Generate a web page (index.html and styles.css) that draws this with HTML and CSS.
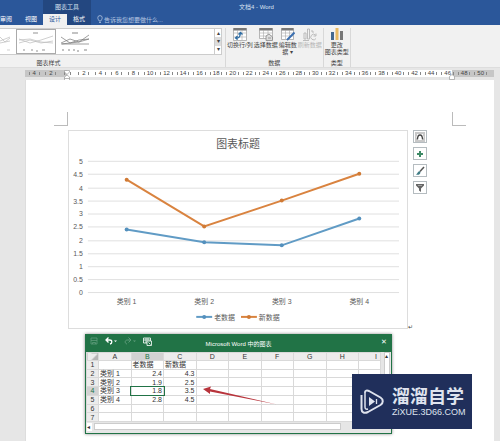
FILE: index.html
```html
<!DOCTYPE html>
<html lang="zh-CN">
<head>
  <meta charset="UTF-8">
  <meta name="viewport" content="width=device-width, initial-scale=1.0">
  <title>文档4 - Word</title>
  <link rel="stylesheet" href="styles.css">
</head>
<body>
  <header class="header">
    <div class="titlebar">
      <span class="context-title">图表工具</span>
      <span class="doc-title">文档4 - Word</span>
    </div>
    <nav class="tabs">
      <button class="tab tab-first">审阅</button>
      <button class="tab">视图</button>
      <button class="tab context active">设计</button>
      <button class="tab context">格式</button>
      <button class="tell-me">
        <svg width="6" height="9" viewBox="0 0 6 9" fill="none" stroke="currentColor" stroke-width="0.8"><path d="M2 6C2 5 .8 4.400 .8 2.800A2.200 2.200 0 0 1 5.200 2.800C5.200 4.400 4 5 4 6ZM2 7.500h2"/></svg>
        告诉我您想要做什么...
      </button>
    </nav>
  </header>

  <section class="ribbon">
    <div class="group group-styles">
      <div class="gallery">
        <button class="style-item cut" aria-label="样式 1">
          <svg width="12" height="22" viewBox="0 0 12 22" fill="none" stroke="#bbb" stroke-width="0.7"><path d="M0 10l10-4M0 12l10-2M0 6l5 5 5-4M7 19h3"/></svg>
        </button>
        <button class="style-item selected" aria-label="样式 2">
          <svg width="38" height="22" viewBox="0 0 38 22" fill="none" stroke="#bbb" stroke-width="0.7"><path d="M2 8l11 4 11-3 12-4M2 12l11-3 11 3 12-2M2 9l11-1 11 3 12 1"/><path stroke="#666" d="M16 2h5M6 19h2M14 19h2M19 20h2M25 19h3"/></svg>
        </button>
        <button class="style-item" aria-label="样式 3">
          <svg width="32" height="22" viewBox="0 0 32 22" fill="none" stroke="#777" stroke-width="0.7"><path d="M1 6l9 6 9-1 10-7M1 12l9-4 9 3 10-3M1 13l9-1 9-3 10-1M2 13h27"/><path stroke="#555" d="M12 2h6M2 19h2M8 19h2M13 19h2M17 20h2M24 19h3"/></svg>
        </button>
        <div class="gallery-scroll">
          <button aria-label="向上">▴</button>
          <button aria-label="向下">▾</button>
          <button aria-label="更多">▾</button>
        </div>
      </div>
      <div class="group-name">图表样式</div>
    </div>

    <div class="group">
      <div class="commands">
        <button class="command">
          <svg width="14" height="13" viewBox="0 0 14 13"><path fill="#fff" stroke="#999" stroke-width=".7" d="M.5.500h13v12H.5z"/><path fill="#777" d="M.5 0h13v2.500H.5z"/><path stroke="#aaa" stroke-width=".6" d="M4.500 2v10M9 2v10M1 5h12M1 9h12"/><path fill="none" stroke="#2e6da4" stroke-width="1.300" d="M3 10c3 .5 4-1 4.500-5M5.500 6.500l2-2 2 2M4.500 8L2.500 10l2 1.500"/></svg>
          <span>切换行/列</span>
        </button>
        <button class="command">
          <svg width="14" height="13" viewBox="0 0 14 13"><path fill="#fff" stroke="#999" stroke-width=".7" d="M.5.500h13v10H.5z"/><path fill="#777" d="M.5 0h13v2.500H.5z"/><path stroke="#aaa" stroke-width=".6" d="M4.500 2v8M9 2v8M1 5h12M1 8h12"/><path fill="#ddd" stroke="#888" stroke-width=".8" d="M7 12.500V8l3-2 3.500 3v3.500zM9 10h3"/></svg>
          <span>选择数据</span>
        </button>
        <button class="command">
          <svg width="14" height="13" viewBox="0 0 14 13"><path fill="#fff" stroke="#999" stroke-width=".7" d="M.5.500h12v11H.5z"/><path fill="#777" d="M.5 0h12v2.500H.5z"/><path stroke="#aaa" stroke-width=".6" d="M4.500 2v9M8.500 2v9M1 5h11M1 8h11"/><path stroke="#3b6fb0" stroke-width="2" d="M13.500 4.500L6 12"/></svg>
          <span>编辑数<br>据 ▾</span>
        </button>
        <button class="command" disabled>
          <svg width="14" height="13" viewBox="0 0 14 13" fill="none" stroke="#b5b5b5" stroke-width=".9"><path d="M1 5h2v6H1zM4.500 1h2v10h-2zM8 3h2v2M12.500 7A2.800 2.800 0 1 0 13 10.500M13 5.500V8h-2.500M0 12.500h6"/></svg>
          <span>刷新数据</span>
        </button>
      </div>
      <div class="group-name">数据</div>
    </div>

    <div class="group">
      <div class="commands">
        <button class="command">
          <svg width="12" height="13" viewBox="0 0 12 13"><path fill="#44688f" d="M0 4h3v8H0z"/><path fill="#e8b962" d="M4.500 0h3v12h-3z"/><path fill="#777" d="M9 3h3v9H9z"/></svg>
          <span>更改<br>图表类型</span>
        </button>
      </div>
      <div class="group-name">类型</div>
    </div>
  </section>

  <div class="ruler">
    <div class="scale">
      <span>4</span><span>2</span><span></span><span>2</span><span>4</span><span>6</span><span>8</span>
      <span>10</span><span>12</span><span>14</span><span>16</span><span>18</span><span>20</span><span>22</span>
      <span>24</span><span>26</span><span>28</span><span>30</span><span>32</span><span>34</span><span>36</span>
      <span>38</span><span>40</span><span>42</span><span>44</span><span>46</span><span>48</span><span>50</span>
      <svg class="indent indent-left" width="6" height="12" viewBox="0 0 6 12" fill="#fff" stroke="#999" stroke-width=".7"><path d="M.5.500h5v1.500L3 4.500.5 2zM3 5l2.500 2v4.500H.5V7zM.5 8.500h5"/></svg>
      <svg class="indent indent-right" width="6" height="6" viewBox="0 0 6 6" fill="#fff" stroke="#999" stroke-width=".7"><path d="M3 .5l2.500 2v3H.5v-3z"/></svg>
    </div>
  </div>

  <main class="workspace">
    <article class="page">
      <div class="margins">
        <i class="corner corner-left"></i>
        <i class="corner corner-right"></i>
      </div>
      <div class="chart-row">
        <figure class="chart">
          <svg viewBox="0 0 340 198" role="img" aria-label="图表标题">
            <path class="grid" d="M19 30.500h313M19 43.500h313M19 57.500h313M19 70.500h313M19 83.500h313M19 96.500h313M19 110.500h313M19 123.500h313M19 136.500h313M19 149.500h313M19 162.500h313"/>
            <text class="chart-title" x="170" y="17">图表标题</text>
            <g class="axis-y">
              <text x="14" y="33">5</text>
              <text x="14" y="46">4.5</text>
              <text x="14" y="60">4</text>
              <text x="14" y="73">3.5</text>
              <text x="14" y="86">3</text>
              <text x="14" y="99">2.5</text>
              <text x="14" y="113">2</text>
              <text x="14" y="126">1.5</text>
              <text x="14" y="139">1</text>
              <text x="14" y="152">0.5</text>
              <text x="14" y="165">0</text>
            </g>
            <g class="axis-x">
              <text x="58" y="174">类别 1</text>
              <text x="136" y="174">类别 2</text>
              <text x="214" y="174">类别 3</text>
              <text x="292" y="174">类别 4</text>
            </g>
            <g class="old">
              <polyline points="58,99 136,112 214,115 292,88"/>
              <circle cx="58" cy="99" r="2"/><circle cx="136" cy="112" r="2"/><circle cx="214" cy="115" r="2"/><circle cx="292" cy="88" r="2"/>
              <path d="M128 187h16"/><circle cx="136" cy="187" r="2"/>
            </g>
            <g class="new">
              <polyline points="58,49 136,96 214,70 292,43"/>
              <circle cx="58" cy="49" r="2"/><circle cx="136" cy="96" r="2"/><circle cx="214" cy="70" r="2"/><circle cx="292" cy="43" r="2"/>
              <path d="M173 187h16"/><circle cx="181" cy="187" r="2"/>
            </g>
            <g class="legend">
              <text x="146" y="190">老数据</text>
              <text x="191" y="190">新数据</text>
            </g>
          </svg>
          <span class="paragraph-mark">↵</span>
        </figure>
        <div class="chart-tools">
          <button aria-label="布局选项"><svg width="10" height="10" viewBox="0 0 10 10" fill="none" stroke="#777" stroke-width=".8"><path d="M0 1h10M0 9h10M0 3h2M8 3h2M0 5h1.500M8.500 5H10M0 7h2M8 7h2"/><path stroke="#444" stroke-width="1.300" d="M2.500 7.500C2.500 1.500 7.500 1.500 7.500 7.500"/></svg></button>
          <button aria-label="图表元素"><svg width="10" height="10" viewBox="0 0 10 10"><path stroke="#3d8a66" stroke-width="2" d="M5 2v6M2 5h6"/></svg></button>
          <button aria-label="图表样式"><svg width="10" height="10" viewBox="0 0 10 10"><path stroke="#555" stroke-width="1.500" d="M9 1L5 5.500"/><path fill="#3f7c85" d="M5.500 6.500C5 9 3 9 1 8.500 2.500 8 2.500 5.500 4.500 5z"/></svg></button>
          <button aria-label="图表筛选器"><svg width="10" height="10" viewBox="0 0 10 10"><path fill="#666" d="M1 1h8v1.500L6 5.500V9L4 7.500v-2L1 2.500z"/><path stroke="#fff" stroke-width=".4" d="M3 2.500h4"/></svg></button>
        </div>
      </div>
    </article>

    <section class="sheet">
      <div class="sheet-header">
        <div class="quick">
          <svg class="dim" width="8" height="8" viewBox="0 0 8 8" fill="none" stroke="currentColor" stroke-width=".8"><path d="M1 1h6v6H1zM1 3.500h6M2.500 7V5.500h3V7"/></svg>
          <svg width="12" height="8" viewBox="0 0 12 8" fill="none" stroke="currentColor"><path stroke-width="1.300" d="M3.500.500L1 3l2.500 2.500M1 3h3.500c3 0 3 3.500.5 4"/><path stroke="none" fill="currentColor" d="M9 3.500h3L10.500 5z"/></svg>
          <svg class="dim" width="12" height="8" viewBox="0 0 12 8" fill="none" stroke="currentColor"><path d="M4.500.500L7 3 4.500 5.500M7 3H3.500C.5 3 .5 6.500 3 7"/><path stroke="none" fill="currentColor" d="M9 3.500h3L10.500 5z"/></svg>
          <svg width="9" height="9" viewBox="0 0 9 9" fill="none" stroke="currentColor" stroke-width=".8"><path d="M.5 1h7v5h-7zM.5 3h7M3 1v5M5 1v2"/><path fill="#217346" d="M4 4h4.500v4.500H4zM5.500 5.500l2 2"/></svg>
        </div>
        <h2>Microsoft Word 中的图表</h2>
        <button class="close" aria-label="关闭">✕</button>
      </div>
      <div class="sheet-body">
        <div class="cells">
          <table>
            <colgroup><col class="col-num"><col span="8"><col class="col-last"></colgroup>
            <thead>
              <tr><th class="select-all"></th><th>A</th><th class="current">B</th><th>C</th><th>D</th><th>E</th><th>F</th><th>G</th><th>H</th><th>I</th></tr>
            </thead>
            <tbody>
              <tr><th>1</th><td></td><td>老数据</td><td>新数据</td><td></td><td></td><td></td><td></td><td></td><td></td></tr>
              <tr><th>2</th><td>类别 1</td><td class="num">2.4</td><td class="num">4.3</td><td></td><td></td><td></td><td></td><td></td><td></td></tr>
              <tr><th>3</th><td>类别 2</td><td class="num">1.9</td><td class="num">2.5</td><td></td><td></td><td></td><td></td><td></td><td></td></tr>
              <tr><th class="current">4</th><td>类别 3</td><td class="num cell-active">1.8</td><td class="num">3.5</td><td></td><td></td><td></td><td></td><td></td><td></td></tr>
              <tr><th>5</th><td>类别 4</td><td class="num">2.8</td><td class="num">4.5</td><td></td><td></td><td></td><td></td><td></td><td></td></tr>
              <tr><th>6</th><td></td><td></td><td></td><td></td><td></td><td></td><td></td><td></td><td></td></tr>
              <tr><th>7</th><td></td><td></td><td></td><td></td><td></td><td></td><td></td><td></td><td></td></tr>
            </tbody>
          </table>
        </div>
        <div class="scroll-y"><span>▴</span></div>
      </div>
      <div class="scroll-x"><span>◂</span><div class="thumb"></div></div>
      <svg class="arrow" width="76" height="20" viewBox="0 0 76 20"><path fill="#b8343c" d="M1 3L9 .5 8 3 75 18.500 8 5.500 8 8z"/></svg>
    </section>

    <aside class="brand">
      <svg width="24" height="25" viewBox="0 0 24 25" fill="none" stroke="#dfe3ee"><path stroke-width="2" stroke-linejoin="round" d="M5 3.500C5 1.500 7 1 9 2L20.500 8.500C23.500 10.500 23.500 14 20.500 16L8 23C4 25 1.500 23 1.500 20V6"/><path stroke-width="1.500" d="M5 3v15c0 2 1 2.500 3 2"/><path fill="#dfe3ee" stroke="none" d="M9 8l6 4.500L9 17z"/><path stroke-width="1.300" d="M16.500 10v5"/></svg>
      <div>
        <div class="brand-name">溜溜自学</div>
        <div class="brand-url">ZiXUE.3D66.COM</div>
      </div>
    </aside>
  </main>
</body>
</html>
```
FILE: styles.css
```css
* {
  box-sizing: border-box;
}
body {
  margin: 0;
  min-height: 100vh;
  display: flex;
  flex-direction: column;
  overflow: hidden;
  background: #e6e6e6;
  color: #444;
  font-family: "Liberation Sans", "Noto Sans CJK SC", sans-serif;
  font-size: 6px;
  line-height: 8px;
}
button {
  margin: 0;
  padding: 0;
  border: 0;
  background: none;
  color: inherit;
  font: inherit;
  white-space: nowrap;
}
svg {
  display: block;
}

/* title bar and tabs */
.header {
  background: #2b579a;
  color: #dbe4f2;
}
.titlebar {
  display: flex;
  align-items: center;
  height: 14px;
  padding-left: 43px;
}
.context-title {
  width: 48px;
  line-height: 14px;
  text-align: center;
  background: #234780;
}
.doc-title {
  flex: 1;
  padding-left: 148px;
}
.tabs {
  display: flex;
  height: 11px;
}
.tab {
  width: 24px;
  line-height: 11px;
  color: #fff;
}
.tab-first {
  width: 19px;
  text-align: left;
}
.tab.context {
  background: #234780;
}
.tab.active {
  background: #f1f1f1;
  color: #2b579a;
}
.tell-me {
  display: flex;
  align-items: center;
  gap: 1px;
  padding-left: 6px;
  color: #b4c5e0;
}

/* ribbon */
.ribbon {
  display: flex;
  height: 43px;
  padding-top: 3px;
  background: #f1f1f1;
  border-bottom: 1px solid #ddd;
}
.group {
  display: flex;
  flex-direction: column;
  justify-content: space-between;
  padding: 0 1px;
  border-right: 1px solid #d8d8d8;
}
.group-styles {
  width: 226px;
  padding: 0 3px 0 0;
}
.group-name {
  text-align: center;
}
.group-styles .group-name {
  padding-right: 125px;
}
.gallery {
  display: flex;
  height: 27px;
  background: #fff;
  border: 1px solid #ccc;
  border-left: 0;
}
.style-item {
  display: flex;
  align-items: center;
  justify-content: center;
  width: 40px;
}
.style-item.cut {
  width: 16px;
  justify-content: flex-start;
}
.style-item.selected {
  border: 1px solid #aaa;
}
.gallery-scroll {
  display: flex;
  flex-direction: column;
  width: 7px;
  margin-left: auto;
  border-left: 1px solid #ccc;
}
.gallery-scroll button {
  flex: 1;
  line-height: 7px;
}
.gallery-scroll button:nth-child(2) {
  background: #ddd;
}
.commands {
  display: flex;
  gap: 1px;
}
.command {
  display: flex;
  flex-direction: column;
  align-items: center;
  gap: 1px;
  line-height: 7px;
}
.command:disabled {
  color: #b5b5b5;
}

/* ruler */
.ruler {
  padding: 2px 6px 3px 25px;
}
.scale {
  position: relative;
  display: grid;
  grid-template-columns: repeat(28, 1fr);
  padding: 0 5px 0 1px;
  background: linear-gradient(90deg, #c6c6c6 9%, #fff 9%, #fff 91%, #c6c6c6 91%);
}
.scale span {
  display: flex;
  align-items: center;
  justify-content: space-evenly;
  height: 7px;
  line-height: 7px;
}
.scale span::before,
.scale span::after {
  content: "";
  width: 1px;
  height: 3px;
  background: #888;
}
.indent {
  position: absolute;
  top: 0;
}
.indent-left {
  left: 39px;
}
.indent-right {
  right: 39px;
  top: 4px;
}

/* document */
.workspace {
  position: relative;
  flex: 1;
  display: flex;
  padding: 0 6px 0 25px;
}
.page {
  flex: 1;
  padding-top: 32px;
  background: #fff;
  border-left: 1px solid #ddd;
}
.margins {
  display: flex;
  justify-content: space-between;
  padding: 0 28px;
}
.corner {
  width: 14px;
  height: 14px;
  border-bottom: 1px solid #bbb;
}
.corner-left {
  border-right: 1px solid #bbb;
}
.corner-right {
  border-left: 1px solid #bbb;
}
.chart-row {
  display: flex;
  align-items: flex-start;
  gap: 5px;
  padding: 4px 67px 0 42px;
}
.chart {
  position: relative;
  flex: 1;
  margin: 0;
  border: 1px solid #ddd;
}
.chart svg {
  width: 100%;
}
.chart text {
  fill: #595959;
  font-size: 7px;
}
.chart .chart-title {
  font-size: 11px;
  text-anchor: middle;
}
.axis-y {
  text-anchor: end;
}
.axis-x {
  text-anchor: middle;
}
.grid {
  stroke: #e0e0e0;
}
.old,
.new {
  fill: none;
  stroke-width: 2px;
}
.old {
  stroke: #609bc5;
}
.new {
  stroke: #d9833f;
}
.old circle {
  fill: #5490bd;
  stroke: none;
}
.new circle {
  fill: #d07a35;
  stroke: none;
}
.paragraph-mark {
  position: absolute;
  right: -6px;
  bottom: -3px;
}
.chart-tools {
  display: flex;
  flex-direction: column;
  gap: 4px;
}
.chart-tools button {
  display: flex;
  align-items: center;
  justify-content: center;
  width: 14px;
  height: 13px;
  border: 1px solid #b5bcc0;
}

/* embedded sheet window */
.sheet {
  position: absolute;
  top: 254px;
  left: 85px;
  right: 108px;
  background: #e6e6e6;
  border: 1px solid #217346;
  box-shadow: 0 0 3px #888;
  color: #333;
  font-size: 7px;
}
.sheet-header {
  display: grid;
  grid-template-columns: 1fr auto 1fr;
  align-items: center;
  height: 17px;
  padding: 0 4px;
  background: #217346;
  color: #fff;
}
.sheet-header h2 {
  margin: 0;
  font-size: 6px;
  font-weight: normal;
}
.quick {
  display: flex;
  gap: 7px;
  padding-bottom: 4px;
}
.dim {
  color: #5f9c7b;
}
.close {
  justify-self: end;
  padding-bottom: 4px;
}
.sheet-body {
  display: flex;
}
.cells {
  flex: 1;
}
.sheet table {
  width: 100%;
  height: 70px;
  table-layout: fixed;
  border-collapse: collapse;
  background: #fff;
  line-height: 7px;
}
.col-num {
  width: 12px;
}
.col-last {
  width: 22px;
}
.sheet th,
.sheet td {
  padding: 0 1px;
  border: 1px solid #d9d9d9;
  white-space: nowrap;
}
.sheet th {
  padding: 0;
  background: #ececec;
  font-weight: normal;
}
.sheet thead th:last-child {
  text-align: right;
  padding-right: 3px;
}
.sheet th.current {
  background: #d2d2d2;
  color: #217346;
}
.sheet .select-all {
  background: linear-gradient(135deg, #ececec 60%, #b5b5b5 60%);
}
.sheet .num {
  text-align: right;
}
.sheet .cell-active {
  outline: 1px solid #217346;
}
.scroll-y {
  width: 6px;
  margin: 0 1px 0 3px;
  background: #fff;
  border: 1px solid #ccc;
  font-size: 6px;
  line-height: 6px;
}
.scroll-x {
  display: flex;
  align-items: center;
  gap: 2px;
  height: 11px;
  padding: 0 50px 2px 1px;
}
.scroll-x span {
  width: 5px;
  background: #fff;
  font-size: 6px;
}
.thumb {
  flex: 1;
  height: 7px;
  background: #fff;
  border: 1px solid #ccc;
}
.arrow {
  position: absolute;
  top: 51px;
  left: 116px;
}

/* logo plate */
.brand {
  position: absolute;
  top: 294px;
  right: 28px;
  display: flex;
  align-items: center;
  gap: 8px;
  width: 120px;
  height: 55px;
  padding-left: 8px;
  background: #202f5b;
  color: #dfe3ee;
}
.brand-name {
  font-size: 18px;
  font-weight: bold;
  line-height: 20px;
}
.brand-url {
  font-size: 9px;
  line-height: 10px;
}
```
